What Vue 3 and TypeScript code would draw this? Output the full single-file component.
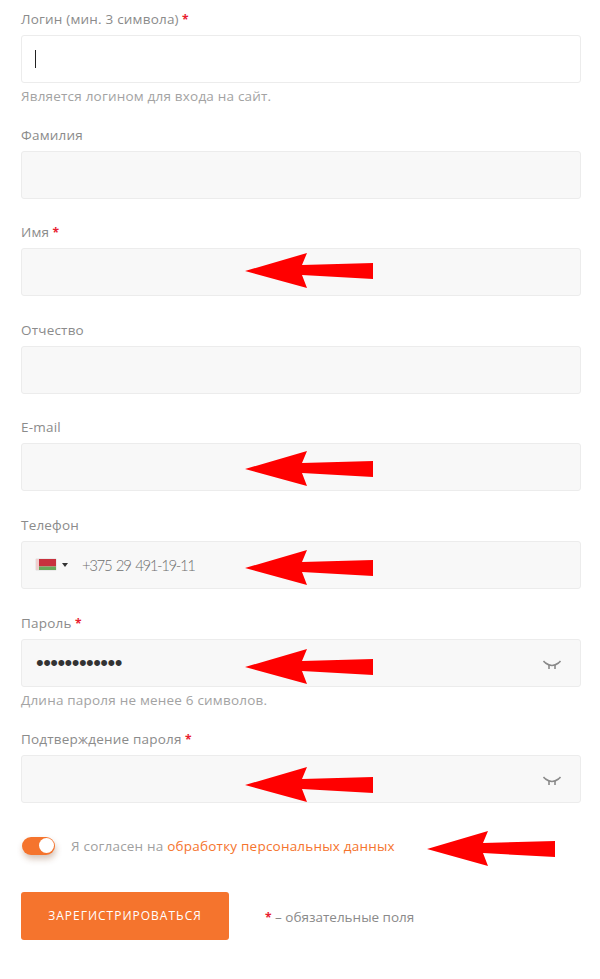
<script setup lang="ts">
interface Field {
  label: string
  required?: boolean
  hint?: string
  kind?: 'plain' | 'active' | 'phone' | 'password' | 'confirm'
  value?: string
  arrowTop?: number
}

const fields: Field[] = [
  { label: 'Логин (мин. 3 символа)', required: true, hint: 'Является логином для входа на сайт.', kind: 'active' },
  { label: 'Фамилия' },
  { label: 'Имя', required: true, arrowTop: 4 },
  { label: 'Отчество' },
  { label: 'E-mail', arrowTop: 7 },
  { label: 'Телефон', kind: 'phone', value: '+375 29 491-19-11', arrowTop: 8 },
  { label: 'Пароль', required: true, hint: 'Длина пароля не менее 6 символов.', kind: 'password', value: '••••••••••••', arrowTop: 9 },
  { label: 'Подтверждение пароля', required: true, kind: 'confirm', arrowTop: 11 }
]
</script>

<template>
  <form class="page" @submit.prevent>
    <div v-for="f in fields" :key="f.label" class="field">
      <label class="label">{{ f.label }}<span v-if="f.required" class="star"> *</span></label>
      <div class="box" :class="{ white: f.kind === 'active' }">
        <span v-if="f.kind === 'active'" class="cursor"></span>
        <template v-if="f.kind === 'phone'">
          <svg class="flag" width="20" height="11" viewBox="0 0 20 11">
            <rect width="20" height="7.5" fill="#c8313e" />
            <rect y="7.5" width="20" height="3.5" fill="#69a859" />
            <rect width="3" height="11" fill="#f0cfcf" />
          </svg>
          <span class="caret"></span>
          <span class="phone">{{ f.value }}</span>
        </template>
        <span v-if="f.kind === 'password'" class="dots">{{ f.value }}</span>
        <svg v-if="f.kind === 'password' || f.kind === 'confirm'" class="eye" width="18" height="10" viewBox="0 0 18 10" fill="none" stroke="#8a8a8a" stroke-width="1.6">
          <path d="M0.5 1L2.5 3Q6 5.5 9 5.5Q12 5.5 15.5 3L17.5 1" />
          <path d="M6 5V9M12 5V9" />
        </svg>
        <svg v-if="f.arrowTop !== undefined" class="arrow" :style="{ top: f.arrowTop + 'px' }" width="128" height="36" viewBox="0 0 128 36">
          <polygon points="0,18 62,0 57,12 128,10 128,26 57,22 62,35" fill="#ff0000" />
        </svg>
      </div>
      <p v-if="f.hint" class="hint">{{ f.hint }}</p>
    </div>

    <div class="consent">
      <span class="toggle"><span class="knob"></span></span>
      <span class="consent-text">Я согласен на <a class="link">обработку персональных данных</a></span>
      <svg class="arrow consent-arrow" width="128" height="36" viewBox="0 0 128 36">
        <polygon points="0,18 61,0 56,12 128,10 128,26 56,22 61,35" fill="#ff0000" />
      </svg>
    </div>

    <div class="actions">
      <button class="submit" type="submit">ЗАРЕГИСТРИРОВАТЬСЯ</button>
      <span class="note"><span class="star">*</span> – обязательные поля</span>
    </div>
  </form>
</template>

<style scoped>
.page {
  box-sizing: border-box;
  width: 600px;
  height: 979px;
  padding: 10.6px 19px 0 21px;
  font-family: "Open Sans", "Noto Sans", sans-serif;
  background: #fff;
  color: #8a8a8a;
}
.field {
  margin-bottom: 25.6px;
}
.label {
  display: block;
  height: 16px;
  margin-bottom: 8px;
  font-size: 13.5px;
  line-height: 16.8px;
  letter-spacing: 0.2px;
  color: #8b8b8b;
}
.star {
  color: #e8202f;
  font-size: 12px;
  font-weight: 700;
}
.box {
  position: relative;
  display: flex;
  align-items: center;
  box-sizing: border-box;
  height: 48px;
  padding: 0 14px;
  background: #f8f8f8;
  border: 1px solid #ececec;
  border-radius: 3px;
}
.box.white {
  background: #fff;
}
.cursor {
  width: 1px;
  height: 18px;
  margin-left: -1px;
  background: #222;
}
.flag {
  flex: none;
  box-shadow: 0 0 1px rgba(0, 0, 0, 0.3);
}
.caret {
  margin-left: 6px;
  width: 0;
  height: 0;
  border-left: 3px solid transparent;
  border-right: 3px solid transparent;
  border-top: 4px solid #333;
}
.phone {
  margin-left: 14px;
  font-family: "Lato", sans-serif;
  font-weight: 300;
  font-size: 15px;
  letter-spacing: -1.4px;
  word-spacing: 2px;
  color: #6f6f6f;
}
.dots {
  font-family: "Liberation Sans", sans-serif;
  font-size: 22px;
  line-height: 22px;
  letter-spacing: -0.55px;
  color: #333;
}
.eye {
  position: absolute;
  right: 19px;
  top: 20px;
}
.arrow {
  position: absolute;
  left: 223px;
}
.hint {
  margin: 6px 0 0;
  height: 12.4px;
  font-size: 13.5px;
  line-height: 14px;
  letter-spacing: 0.2px;
  color: #a3a3a3;
}
.consent {
  position: relative;
  display: flex;
  align-items: center;
  margin-top: 33px;
  padding-left: 1px;
  height: 20px;
}
.toggle {
  position: relative;
  width: 33px;
  height: 18px;
  border-radius: 9px;
  background: #f5742d;
  box-shadow: 1px 4px 6px rgba(120, 60, 20, 0.3);
}
.knob {
  position: absolute;
  right: 1.5px;
  top: 1.5px;
  width: 15px;
  height: 15px;
  border-radius: 50%;
  background: #fff;
}
.consent-text {
  margin-left: 16px;
  font-size: 13.5px;
  letter-spacing: 0.21px;
  color: #a0a0a0;
}
.link {
  color: #f5742d;
}
.consent-arrow {
  left: 406px;
  top: -5px;
}
.actions {
  display: flex;
  align-items: center;
  margin-top: 36px;
}
.submit {
  width: 208px;
  height: 48px;
  border: 0;
  border-radius: 3px;
  background: #f5742d;
  color: #fff;
  font-family: inherit;
  font-size: 12px;
  letter-spacing: 1px;
}
.note {
  margin: 2px 0 0 36px;
  font-size: 13.5px;
  letter-spacing: 0;
  color: #8a8a8a;
}
</style>
